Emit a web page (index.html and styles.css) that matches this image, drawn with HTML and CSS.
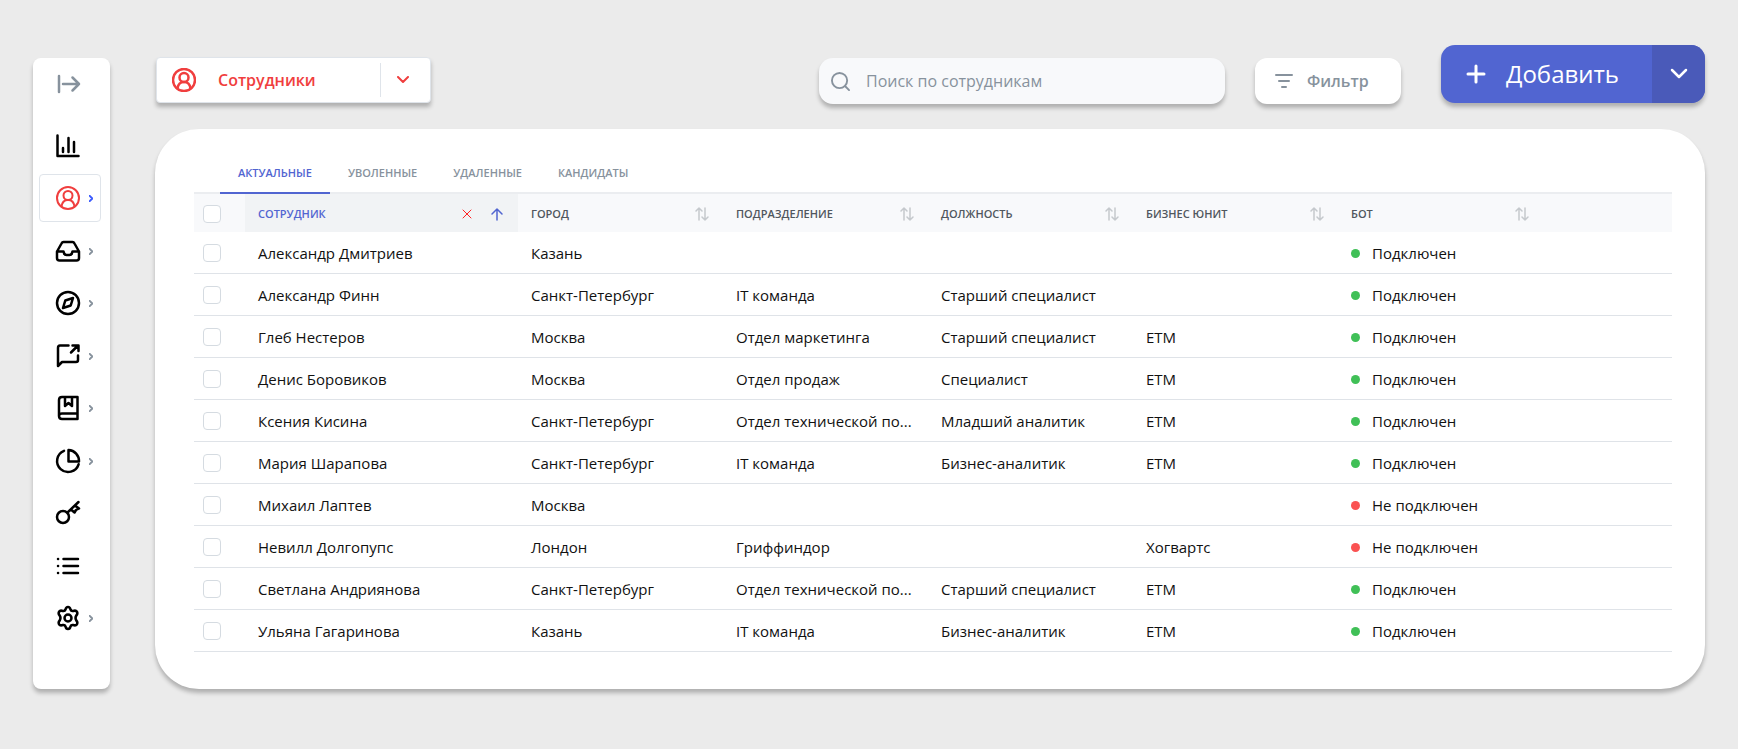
FILE: index.html
```html
<!DOCTYPE html>
<html lang="ru">
<head>
<meta charset="utf-8">
<title>Сотрудники</title>
<meta name="viewport" content="width=device-width, initial-scale=1">
<link rel="stylesheet" href="styles.css">
</head>
<body>
<svg class="sprite" aria-hidden="true">
  <symbol id="i-user" viewBox="0 0 24 24"><circle cx="12" cy="12" r="11"/><circle cx="12" cy="9.500" r="4.500"/><path d="M5.500 20.500c.5-4 3-6.500 6.500-6.500s6 2.500 6.500 6.500"/></symbol>
  <symbol id="i-right" viewBox="0 0 6 10"><path d="M1 1l4 4-4 4"/></symbol>
  <symbol id="i-down" viewBox="0 0 12 8"><path d="M1 1l5 5 5-5"/></symbol>
  <symbol id="i-sort" viewBox="0 0 14 14"><path d="M4 13V1M1 4l3-3 3 3M10 1v12M7 10l3 3 3-3"/></symbol>
</svg>

<nav class="sidebar" aria-label="Разделы">
  <button class="nav-item nav-toggle" type="button" aria-label="Развернуть"><svg class="icon" viewBox="0 0 24 24"><path d="M2 4v16M6 12h16M15.500 5.500L22 12l-6.500 6.500"/></svg></button>
  <a class="nav-item" href="#" aria-label="Статистика"><svg class="icon" viewBox="0 0 24 24"><path d="M1.500 1.500v20.500h21"/><path d="M7 18v-4M12.500 18V4M18 18V8"/></svg></a>
  <a class="nav-item nav-active" href="#" aria-label="Сотрудники"><svg class="icon"><use href="#i-user"/></svg><svg class="chev"><use href="#i-right"/></svg></a>
  <a class="nav-item" href="#" aria-label="Входящие"><svg class="icon" viewBox="0 0 24 24"><path d="M1 12.500L5.500 4.500q.7-1.500 2-1.500h9q1.300 0 2 1.500L23 12.500V19q0 2.500-2.500 2.500h-17Q1 21.500 1 19zM1 12.500h6.500q.5 3.500 3 3.500h3q2.500 0 3-3.500H23"/></svg><svg class="chev"><use href="#i-right"/></svg></a>
  <a class="nav-item" href="#" aria-label="Обзор"><svg class="icon" viewBox="0 0 24 24"><circle cx="12" cy="12" r="11"/><path d="M17 7l-2.300 7.500L7 17l2.300-7.500z"/></svg><svg class="chev"><use href="#i-right"/></svg></a>
  <a class="nav-item" href="#" aria-label="Сообщения"><svg class="icon" viewBox="0 0 24 24"><path d="M12.500 1.500H4Q2 1.500 2 4v18l4-4h14q2 0 2-2v-4.500M15 8.500l7-7M16.500 1.500H22.500V7"/></svg><svg class="chev"><use href="#i-right"/></svg></a>
  <a class="nav-item" href="#" aria-label="База знаний"><svg class="icon" viewBox="0 0 24 24"><path d="M21.500 17.500V1H6Q3 1 3 4v16q0 3 3 3h15.500v-5.500H6q-3 0-3 2.500M9 1v9l3.500-3L16 10V1"/></svg><svg class="chev"><use href="#i-right"/></svg></a>
  <a class="nav-item" href="#" aria-label="Отчёты"><svg class="icon" viewBox="0 0 24 24"><path d="M8 1.800a11 11 0 1 0 14.600 13.500M12.500 1v11.500H23A11 11 0 0 0 12.500 1z"/></svg><svg class="chev"><use href="#i-right"/></svg></a>
  <a class="nav-item" href="#" aria-label="Доступ"><svg class="icon" viewBox="0 0 24 24"><circle cx="7" cy="16" r="6"/><path d="M11.500 11.500L22.500 1M19 4.500l4 3-3 1.500-1.500 2.500-3.500-3"/></svg></a>
  <a class="nav-item" href="#" aria-label="Списки"><svg class="icon" viewBox="0 0 24 24"><path d="M7.500 5H22M7.500 12H22M7.500 19H22M2 5h.1M2 12h.1M2 19h.1"/></svg></a>
  <a class="nav-item" href="#" aria-label="Настройки"><svg class="icon" viewBox="0 0 24 24"><circle cx="12" cy="12" r="3.500"/><path d="M9.500 3.500Q10 1 12 1t2.500 2.500q.7 2 2.700 1.500 2.600-1 3.800.8 1 2-.7 3.700-1.600 2.500 0 5 1.700 1.700.7 3.700-1.200 1.800-3.800.8-2-.5-2.700 1.500Q14 23 12 23t-2.500-2.500Q8.800 18.500 6.800 19 4.200 20 3 18.200q-1-2 .7-3.700 1.600-2.500 0-5Q2 7.800 3 5.800 4.200 4 6.800 5q2 .5 2.700-1.500z"/></svg><svg class="chev"><use href="#i-right"/></svg></a>
</nav>

<main class="main">
  <header class="toolbar">
    <button class="section-select" type="button">
      <svg class="icon"><use href="#i-user"/></svg>
      <span class="section-name">Сотрудники</span>
      <span class="section-arrow"><svg class="down"><use href="#i-down"/></svg></span>
    </button>
    <label class="search">
      <svg class="search-icon" viewBox="0 0 20 20"><circle cx="9" cy="9" r="8"/><path d="M15 15l4 4"/></svg>
      <input class="search-input" type="search" placeholder="Поиск по сотрудникам" aria-label="Поиск по сотрудникам">
    </label>
    <button class="filter" type="button">
      <svg class="filter-icon" viewBox="0 0 18 14"><path d="M1 1h16M4 7h10M7 13h4"/></svg>
      <span>Фильтр</span>
    </button>
    <div class="add">
      <button class="add-main" type="button"><svg class="plus" viewBox="0 0 18 18"><path d="M9 1v16M1 9h16"/></svg><span>Добавить</span></button>
      <button class="add-more" type="button" aria-label="Другие варианты"><svg class="add-down" viewBox="0 0 16 10"><path d="M1 1l7 7 7-7"/></svg></button>
    </div>
  </header>

  <section class="panel">
    <div class="tabs" role="tablist">
      <button class="tab tab-active" type="button" role="tab" aria-selected="true">АКТУАЛЬНЫЕ</button>
      <button class="tab" type="button" role="tab" aria-selected="false">УВОЛЕННЫЕ</button>
      <button class="tab" type="button" role="tab" aria-selected="false">УДАЛЕННЫЕ</button>
      <button class="tab" type="button" role="tab" aria-selected="false">КАНДИДАТЫ</button>
    </div>
    <table class="table">
      <colgroup><col class="c-check"><col class="c-name"><col class="c-data"><col class="c-data"><col class="c-data"><col class="c-data"><col class="c-data"><col></colgroup>
      <thead>
        <tr>
          <th class="check"><input type="checkbox" aria-label="Выбрать всех"></th>
          <th class="sorted"><div class="head"><span class="head-name">СОТРУДНИК</span><button class="icon-btn" type="button" aria-label="Сбросить сортировку"><svg class="cross" viewBox="0 0 8 8"><path d="M0 0l8 8M8 0L0 8"/></svg></button><button class="icon-btn" type="button" aria-label="По возрастанию"><svg class="up" viewBox="0 0 12 12"><path d="M6 12V1M1 6l5-5 5 5"/></svg></button></div></th>
          <th><div class="head"><span class="head-name">ГОРОД</span><button class="icon-btn" type="button" aria-label="Сортировать"><svg class="sort"><use href="#i-sort"/></svg></button></div></th>
          <th><div class="head"><span class="head-name">ПОДРАЗДЕЛЕНИЕ</span><button class="icon-btn" type="button" aria-label="Сортировать"><svg class="sort"><use href="#i-sort"/></svg></button></div></th>
          <th><div class="head"><span class="head-name">ДОЛЖНОСТЬ</span><button class="icon-btn" type="button" aria-label="Сортировать"><svg class="sort"><use href="#i-sort"/></svg></button></div></th>
          <th><div class="head"><span class="head-name">БИЗНЕС ЮНИТ</span><button class="icon-btn" type="button" aria-label="Сортировать"><svg class="sort"><use href="#i-sort"/></svg></button></div></th>
          <th><div class="head"><span class="head-name">БОТ</span><button class="icon-btn" type="button" aria-label="Сортировать"><svg class="sort"><use href="#i-sort"/></svg></button></div></th>
          <th></th>
        </tr>
      </thead>
      <tbody>
        <tr><td class="check"><input type="checkbox" aria-label="Александр Дмитриев"></td><td>Александр Дмитриев</td><td>Казань</td><td></td><td></td><td></td><td><span class="status on">Подключен</span></td><td></td></tr>
        <tr><td class="check"><input type="checkbox" aria-label="Александр Финн"></td><td>Александр Финн</td><td>Санкт-Петербург</td><td>IT команда</td><td>Старший специалист</td><td></td><td><span class="status on">Подключен</span></td><td></td></tr>
        <tr><td class="check"><input type="checkbox" aria-label="Глеб Нестеров"></td><td>Глеб Нестеров</td><td>Москва</td><td>Отдел маркетинга</td><td>Старший специалист</td><td>ETM</td><td><span class="status on">Подключен</span></td><td></td></tr>
        <tr><td class="check"><input type="checkbox" aria-label="Денис Боровиков"></td><td>Денис Боровиков</td><td>Москва</td><td>Отдел продаж</td><td>Специалист</td><td>ETM</td><td><span class="status on">Подключен</span></td><td></td></tr>
        <tr><td class="check"><input type="checkbox" aria-label="Ксения Кисина"></td><td>Ксения Кисина</td><td>Санкт-Петербург</td><td>Отдел технической по...</td><td>Младший аналитик</td><td>ETM</td><td><span class="status on">Подключен</span></td><td></td></tr>
        <tr><td class="check"><input type="checkbox" aria-label="Мария Шарапова"></td><td>Мария Шарапова</td><td>Санкт-Петербург</td><td>IT команда</td><td>Бизнес-аналитик</td><td>ETM</td><td><span class="status on">Подключен</span></td><td></td></tr>
        <tr><td class="check"><input type="checkbox" aria-label="Михаил Лаптев"></td><td>Михаил Лаптев</td><td>Москва</td><td></td><td></td><td></td><td><span class="status off">Не подключен</span></td><td></td></tr>
        <tr><td class="check"><input type="checkbox" aria-label="Невилл Долгопупс"></td><td>Невилл Долгопупс</td><td>Лондон</td><td>Гриффиндор</td><td></td><td>Хогвартс</td><td><span class="status off">Не подключен</span></td><td></td></tr>
        <tr><td class="check"><input type="checkbox" aria-label="Светлана Андриянова"></td><td>Светлана Андриянова</td><td>Санкт-Петербург</td><td>Отдел технической по...</td><td>Старший специалист</td><td>ETM</td><td><span class="status on">Подключен</span></td><td></td></tr>
        <tr><td class="check"><input type="checkbox" aria-label="Ульяна Гагаринова"></td><td>Ульяна Гагаринова</td><td>Казань</td><td>IT команда</td><td>Бизнес-аналитик</td><td>ETM</td><td><span class="status on">Подключен</span></td><td></td></tr>
      </tbody>
    </table>
  </section>
</main>
</body>
</html>
```
FILE: styles.css
```css
* { box-sizing: border-box; }

body {
  margin: 0;
  padding: 45px 33px 60px;
  display: flex;
  align-items: stretch;
  gap: 45px;
  background: #ebebeb;
  color: #111;
  font: 15px/20px "Open Sans", "Noto Sans", sans-serif;
}

button {
  margin: 0;
  padding: 0;
  border: 0;
  background: none;
  color: inherit;
  font: inherit;
  cursor: pointer;
}

svg {
  display: block;
  flex: none;
  fill: none;
  stroke: currentColor;
  stroke-width: 2;
  stroke-linecap: round;
  stroke-linejoin: round;
  overflow: visible;
}

.sprite { position: absolute; width: 0; height: 0; }
.icon { width: 24px; height: 24px; }

/* Sidebar */
.sidebar {
  flex: none;
  width: 77px;
  margin-top: 13px;
  padding: 2px 6px 0;
  display: flex;
  flex-direction: column;
  background: #fff;
  border-radius: 8px;
  box-shadow: 0 4px 4px rgba(0, 0, 0, .25);
}

.nav-item {
  height: 48px;
  margin-bottom: 5px;
  padding-left: 16px;
  display: flex;
  align-items: center;
  gap: 9px;
  border: 1px solid transparent;
  border-radius: 4px;
  color: #000;
}

.nav-item .icon { stroke-width: 2.5; }
.nav-item + .nav-item:nth-child(even) { margin-bottom: 4px; }
.nav-toggle { margin-bottom: 14px; padding-left: 17px; color: #87929d; }
.nav-active { margin-right: 3px; border-color: #dfe4ea; color: #f03e3e; }
.nav-item.nav-active .icon { stroke-width: 2; }
.chev { width: 4px; height: 7px; color: #87929d; stroke-width: 3; }
.nav-active .chev { color: #3b5bfd; }

/* Toolbar */
.main { flex: 1; min-width: 0; display: flex; flex-direction: column; gap: 26px; }
.toolbar { display: flex; align-items: flex-end; }

.section-select {
  width: 275px;
  height: 46px;
  margin-left: 1px;
  padding: 0 1px 0 15px;
  display: flex;
  align-items: center;
  background: #fff;
  border: 1px solid #dfe4ea;
  border-radius: 4px;
  box-shadow: 0 4px 4px rgba(0, 0, 0, .25);
  color: #f03e3e;
  font-size: 16px;
  font-weight: 600;
}

.section-name { flex: 1; padding-left: 22px; text-align: left; }
.section-select .icon { stroke-width: 2.5; }

.section-arrow {
  width: 49px;
  height: 34px;
  padding-right: 4px;
  display: grid;
  place-items: center;
  border-left: 1px solid #dfe4ea;
}

.down { width: 12px; height: 8px; }

.search {
  width: 406px;
  height: 46px;
  margin: 0 0 -1px auto;
  padding: 0 16px 0 12px;
  display: flex;
  align-items: center;
  gap: 16px;
  background: #f8f9fb;
  border-radius: 14px;
  box-shadow: 0 4px 4px rgba(0, 0, 0, .25);
  color: #87929d;
}

.search-icon { width: 19px; height: 19px; }

.search-input {
  flex: 1;
  min-width: 0;
  padding: 0;
  border: 0;
  outline: 0;
  background: none;
  color: #111;
  font: inherit;
  font-size: 16px;
  line-height: 24px;
}

.search-input::placeholder { color: #87929d; opacity: 1; }

.filter {
  width: 146px;
  height: 46px;
  margin: 0 0 -1px 30px;
  padding-left: 20px;
  display: flex;
  align-items: center;
  gap: 14px;
  background: #fff;
  border-radius: 12px;
  box-shadow: 0 4px 4px rgba(0, 0, 0, .25);
  color: #87929d;
  font-size: 16px;
  font-weight: 600;
}

.filter-icon { width: 18px; height: 14px; }

.add {
  height: 58px;
  margin-left: 40px;
  display: flex;
  overflow: hidden;
  border-radius: 14px;
  background: #5165d1;
  color: #fff;
  font-size: 24px;
  font-weight: 500;
  box-shadow: 0 4px 4px rgba(0, 0, 0, .25);
}

.add-main { width: 211px; padding-left: 26px; display: flex; align-items: center; gap: 21px; }
.add-more { width: 53px; display: grid; place-items: center; background: #4a5ab9; }
.plus { width: 18px; height: 18px; stroke-width: 3; }
.add-down { width: 16px; height: 10px; stroke-width: 2.5; }

/* Panel */
.panel {
  padding: 22px 33px 37px 39px;
  background: #fff;
  border-radius: 44px;
  box-shadow: 0 4px 4px rgba(0, 0, 0, .25);
}

.tabs {
  padding-left: 26px;
  display: flex;
  border-bottom: 2px solid #ebedf0;
}

.tab {
  height: 43px;
  margin-bottom: -2px;
  padding: 3px 18px 0;
  border-bottom: 2px solid transparent;
  color: #87929d;
  font-size: 11px;
  font-weight: 600;
}

.tab-active { border-color: #5165d1; color: #5165d1; }

.table { width: 100%; table-layout: fixed; border-collapse: separate; border-spacing: 0; }
.c-check { width: 51px; }
.c-name { width: 273px; }
.c-data { width: 205px; }

th {
  height: 38px;
  padding: 2px 13px 0;
  background: #f8f9fb;
  color: #50575e;
  font-size: 11px;
  font-weight: 600;
  text-align: left;
}

.sorted { background: #f1f3f5; color: #5165d1; }
.head { display: flex; align-items: center; }
.head-name { flex: 1; }
.icon-btn { flex: none; }
.cross { width: 8px; height: 8px; margin-right: 20px; color: #f22; stroke-width: 1; }
.up { width: 12px; height: 12px; margin-right: 2px; stroke-width: 1.5; }
.sort { width: 14px; height: 14px; margin-right: 1px; color: #c5c9cd; stroke-width: 1.5; }

td {
  height: 42px;
  padding: 0 13px;
  border-bottom: 1px solid #dfe3e8;
  white-space: nowrap;
}

.check { padding: 1px 0 0 9px; }

.check input {
  display: block;
  width: 18px;
  height: 18px;
  margin: 0;
  appearance: none;
  background: #fff;
  border: 1px solid #d5dbe1;
  border-radius: 4px;
}

.check input:checked { background: #5165d1; }

.status { display: flex; align-items: center; gap: 12px; }
.status::before { content: ""; width: 9px; height: 9px; margin-top: 2px; border-radius: 50%; background: currentColor; }
.status.on::before { background: #40c057; }
.status.off::before { background: #fa5252; }
```
